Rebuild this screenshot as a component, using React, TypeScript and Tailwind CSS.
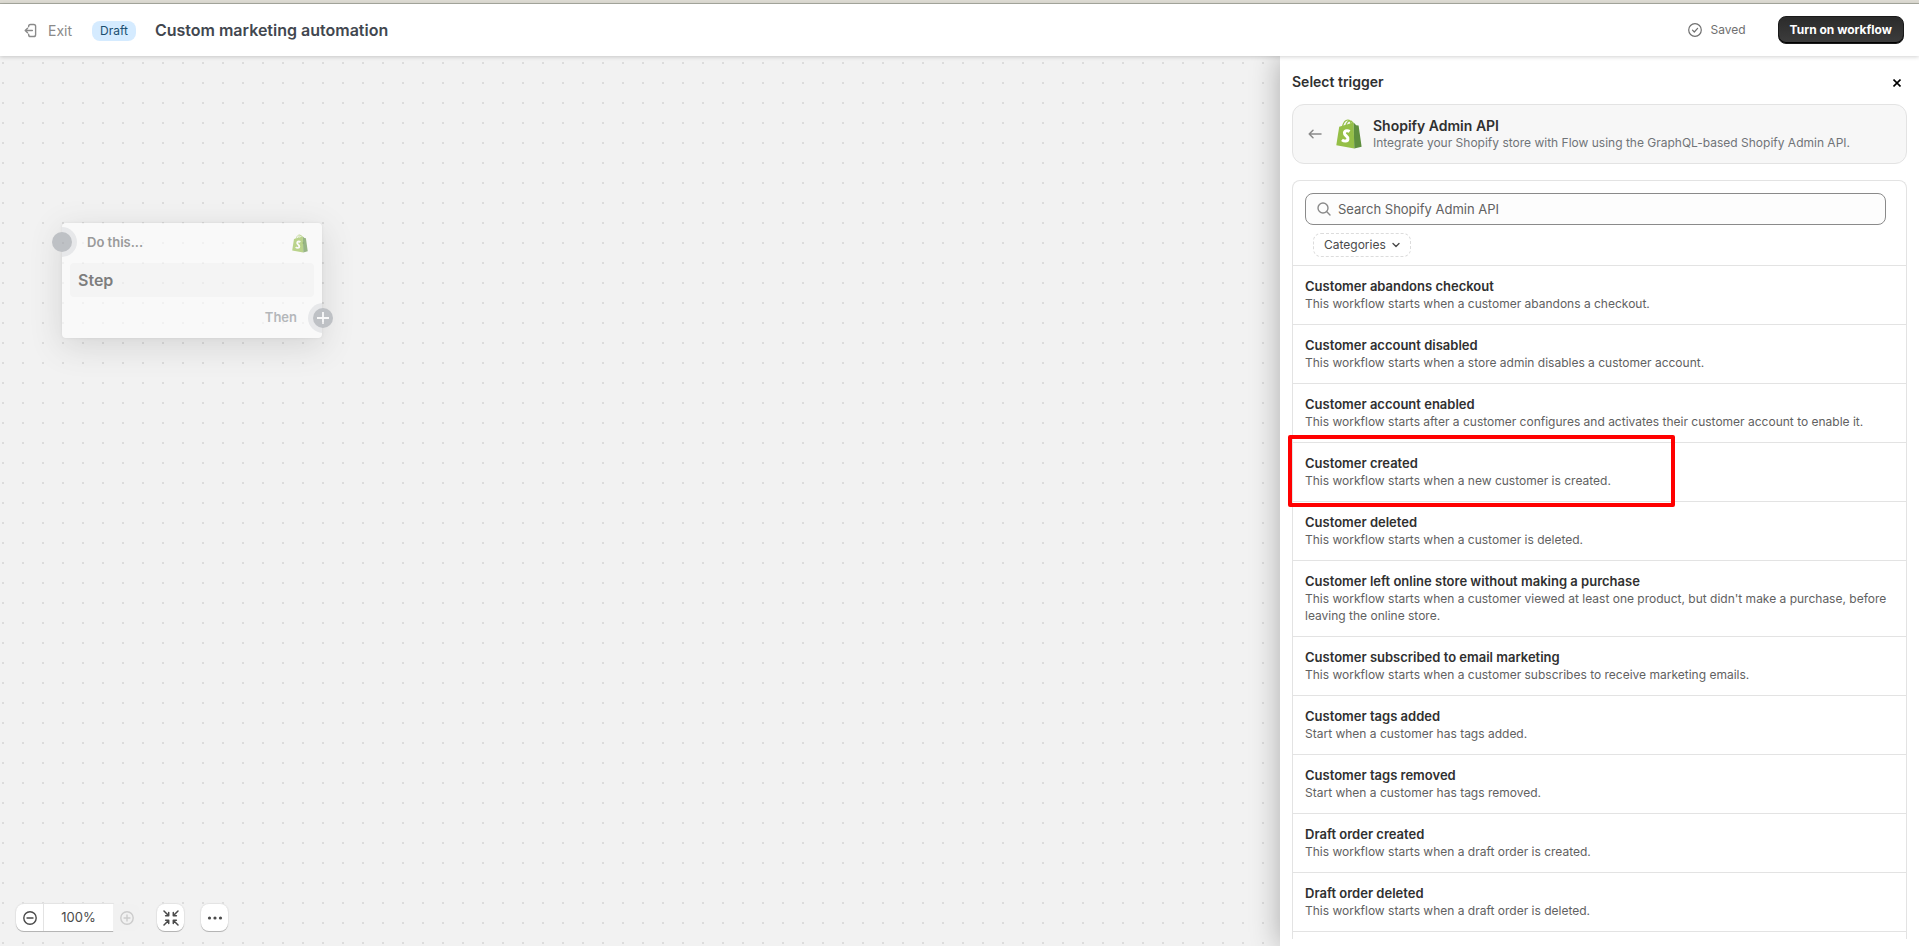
import React, { useState } from 'react';

interface Trigger {
    title: string;
    description: string;
    highlighted?: boolean;
}

interface IconProps {
    className?: string;
}

const TRIGGERS: Trigger[] = [
    { title: 'Customer abandons checkout', description: 'This workflow starts when a customer abandons a checkout.' },
    { title: 'Customer account disabled', description: 'This workflow starts when a store admin disables a customer account.' },
    { title: 'Customer account enabled', description: 'This workflow starts after a customer configures and activates their customer account to enable it.' },
    { title: 'Customer created', description: 'This workflow starts when a new customer is created.', highlighted: true },
    { title: 'Customer deleted', description: 'This workflow starts when a customer is deleted.' },
    { title: 'Customer left online store without making a purchase', description: "This workflow starts when a customer viewed at least one product, but didn't make a purchase, before leaving the online store." },
    { title: 'Customer subscribed to email marketing', description: 'This workflow starts when a customer subscribes to receive marketing emails.' },
    { title: 'Customer tags added', description: 'Start when a customer has tags added.' },
    { title: 'Customer tags removed', description: 'Start when a customer has tags removed.' },
    { title: 'Draft order created', description: 'This workflow starts when a draft order is created.' },
    { title: 'Draft order deleted', description: 'This workflow starts when a draft order is deleted.' },
];

const ShopifyIcon: React.FC<IconProps> = ({ className }) => (
    <svg className={className} viewBox="0 0 26 30" fill="none" aria-hidden="true">
        <path d="M3.2 7.800 17.600 3.600 18.300 29.600 0.300 26.200z" fill="#95bf47" />
        <path d="M17.600 3.600 20.200 6.200 22.600 6.500 25.600 27.700 18.300 29.600z" fill="#5e8e3e" />
        <path d="M6.400 8C7.200 4.400 9.400 1 11.800 1c2 0 3.200 2 3.300 4.800M9.800 7C10.400 4 12.400 1.800 14 1.800c1.800 0 2.600 1.600 2.800 3.600" stroke="#95bf47" strokeWidth="1.200" />
        <path d="M13.600 12.400c-1.200-.8-4.800-1.400-5.200 1.400-.4 2.800 3.900 3.100 3.500 6.200-.3 2.700-3.800 2.600-5.900.9" stroke="#fff" strokeWidth="3" />
    </svg>
);

const ExitIcon: React.FC<IconProps> = ({ className }) => (
    <svg className={className} viewBox="0 0 14 16" fill="none" stroke="currentColor" strokeWidth="1.500" strokeLinecap="round" strokeLinejoin="round" aria-hidden="true">
        <path d="M5 4V3.500A2 2 0 0 1 7 1.500h3.500a2 2 0 0 1 2 2v9a2 2 0 0 1-2 2H7a2 2 0 0 1-2-2V12M9 8H1.500M3.800 5.500 1.300 8l2.500 2.500" />
    </svg>
);

const SavedIcon: React.FC<IconProps> = ({ className }) => (
    <svg className={className} viewBox="0 0 14 14" fill="none" stroke="currentColor" strokeWidth="1.200" strokeLinecap="round" strokeLinejoin="round" aria-hidden="true">
        <circle cx="7" cy="7" r="6.300" />
        <path d="m4.500 7.200 1.800 1.800 3.300-3.700" />
    </svg>
);

const CircleIcon: React.FC<IconProps & { plus?: boolean }> = ({ className, plus }) => (
    <svg className={className} viewBox="0 0 14 14" fill="none" stroke="currentColor" strokeWidth="1.400" strokeLinecap="round" aria-hidden="true">
        <circle cx="7" cy="7" r="6.200" />
        <path d="M4 7h6" />
        {plus && <path d="M7 4v6" />}
    </svg>
);

const FitIcon: React.FC<IconProps> = ({ className }) => (
    <svg className={className} viewBox="0 0 16 16" fill="none" stroke="currentColor" strokeWidth="1.500" strokeLinecap="round" strokeLinejoin="round" aria-hidden="true">
        <path d="m1 1 4.500 4.500M2.600 5.700h3.100V2.600M15 1l-4.500 4.500M13.400 5.700h-3.100V2.600M1 15l4.500-4.500M2.600 10.300h3.100v3.100M15 15l-4.500-4.500M13.400 10.300h-3.100v3.100" />
    </svg>
);

const BackIcon: React.FC<IconProps> = ({ className }) => (
    <svg className={className} viewBox="0 0 14 10" fill="none" stroke="currentColor" strokeWidth="1.500" strokeLinecap="round" strokeLinejoin="round" aria-hidden="true">
        <path d="M13 5H1.200M5 1.200 1.200 5 5 8.800" />
    </svg>
);

const SearchIcon: React.FC<IconProps> = ({ className }) => (
    <svg className={className} viewBox="0 0 14 14" fill="none" stroke="currentColor" strokeWidth="1.400" strokeLinecap="round" aria-hidden="true">
        <circle cx="6" cy="6" r="5" />
        <path d="m9.800 9.800 3.200 3.200" />
    </svg>
);

const Header: React.FC = () => (
    <header className="relative z-20 flex h-[52px] shrink-0 items-center bg-white pl-6 pr-[15px] shadow-[0_1px_4px_rgba(0,0,0,0.18)]">
        <button type="button" className="flex items-center gap-[11px] text-[#8a8a8a]">
            <ExitIcon className="h-[15px] w-[13px]" />
            <span className="pt-px text-sm">Exit</span>
        </button>
        <span className="ml-5 mt-px rounded-lg bg-[#d5ebff] px-2 text-xs leading-5 text-[#1b4f70]">Draft</span>
        <h1 className="ml-[19px] text-base font-semibold text-[#42474f]">Custom marketing automation</h1>
        <div className="ml-auto flex items-center gap-2 text-[#707070]">
            <SavedIcon className="h-[14px] w-[14px]" />
            <span className="text-xs">Saved</span>
        </div>
        <button
            type="button"
            className="ml-8 h-7 rounded-lg border border-[#1a1a1a] bg-linear-to-b from-[#2b2b2b] to-[#3d3d3d] px-[11px] text-xs font-bold text-white shadow-[inset_0_-1px_0_#000]"
        >
            Turn on workflow
        </button>
    </header>
);

const StepNode: React.FC = () => (
    <div className="absolute left-[62px] top-[167px] w-[260px] opacity-60">
        <div className="relative overflow-hidden rounded bg-white p-2 pt-0 shadow-[0_0_3px_rgba(0,0,0,0.12),0_8px_32px_rgba(0,0,0,0.2)]">
            <span className="absolute -left-[15px] top-1 h-[30px] w-[30px] rounded-full bg-[#e1e3e6]" />
            <span className="absolute -right-4 bottom-[5px] h-[30px] w-[30px] rounded-full bg-[#e1e3e6]" />
            <div className="flex h-10 items-center justify-between pl-[17px] pr-[6px]">
                <span className="text-[13px] font-semibold text-[#616161]">Do this...</span>
                <ShopifyIcon className="h-[19px] w-4" />
            </div>
            <div className="rounded bg-[#f6f6f6] px-2 py-[5px] text-base font-semibold text-[#303030]">Step</div>
            <div className="flex h-[33px] items-center justify-end pr-[17px] pt-2">
                <span className="text-[13px] font-semibold text-[#8c9196]">Then</span>
            </div>
        </div>
        <span className="absolute -left-[10px] top-[9px] h-5 w-5 rounded-full bg-[#9da1a8]" />
        <button
            type="button"
            aria-label="Add next step"
            className="absolute -right-[11px] bottom-[10px] flex h-5 w-5 items-center justify-center rounded-full bg-[#9da1a8] text-white"
        >
            <svg className="h-3 w-3" viewBox="0 0 12 12" stroke="currentColor" strokeWidth="1.800" aria-hidden="true">
                <path d="M6 0v12M0 6h12" />
            </svg>
        </button>
    </div>
);

const ZoomControls: React.FC = () => {
    const box = 'flex h-[27px] w-[27px] items-center justify-center rounded-lg bg-white text-[#4a4a4a] shadow-[0_1px_0_#b5b5b5,0_0_1px_1px_#e3e3e3]';

    return (
        <div className="absolute bottom-[15px] left-4 flex gap-[17px]">
            <div className="flex h-[27px]">
                <div className="flex rounded-l-lg bg-white shadow-[0_1px_0_#b5b5b5,0_0_1px_1px_#e3e3e3]">
                    <button type="button" aria-label="Zoom out" className="flex w-7 items-center justify-center border-r border-[#e3e3e3] text-[#4a4a4a]">
                        <CircleIcon className="h-[14px] w-[14px]" />
                    </button>
                    <span className="flex w-[69px] items-center justify-center pt-px text-[13px] text-[#4a4a4a]">100%</span>
                </div>
                <button type="button" aria-label="Zoom in" disabled className="flex w-[27px] items-center justify-center rounded-r-lg bg-[#f1f1f1] text-[#cccccc]">
                    <CircleIcon plus className="h-[14px] w-[14px]" />
                </button>
            </div>
            <button type="button" aria-label="Fit to screen" className={box}>
                <FitIcon className="h-4 w-4" />
            </button>
            <button type="button" aria-label="More actions" className={box}>
                <svg className="h-4 w-4" viewBox="0 0 16 16" fill="currentColor" aria-hidden="true">
                    <circle cx="2.500" cy="8" r="1.600" />
                    <circle cx="8" cy="8" r="1.600" />
                    <circle cx="13.500" cy="8" r="1.600" />
                </svg>
            </button>
        </div>
    );
};

const TriggerRow: React.FC<Trigger> = ({ title, description, highlighted }) => (
    <li className="relative border-b border-[#e3e3e3]">
        <button type="button" className="block w-full px-3 pb-3 pt-[11px] text-left">
            <span className="block text-[13px] font-semibold leading-[18px] text-[#303030]">{title}</span>
            <span className="block text-xs leading-[17px] text-[#616161]">{description}</span>
        </button>
        {highlighted && (
            <span className="pointer-events-none absolute -left-[5px] -top-2 z-10 h-[72px] w-[387px] rounded-[2px] border-4 border-[#ff0000]" />
        )}
    </li>
);

const TriggerPanel: React.FC = () => {
    const [query, setQuery] = useState('');

    const visible = TRIGGERS.filter((t) => t.title.toLowerCase().includes(query.toLowerCase()));

    return (
        <aside className="relative z-10 flex w-[639px] shrink-0 flex-col overflow-y-auto bg-white px-3 pb-[7px] shadow-[0_0_28px_rgba(0,0,0,0.3)]">
            <div className="flex h-12 shrink-0 items-center justify-between pt-1">
                <h2 className="text-sm font-semibold text-[#303030]">Select trigger</h2>
                <button type="button" aria-label="Close" className="p-[6px] pb-1 text-black">
                    <svg className="h-2 w-2" viewBox="0 0 8 8" stroke="currentColor" strokeWidth="1.600" aria-hidden="true">
                        <path d="m.5.5 7 7M7.500.5l-7 7" />
                    </svg>
                </button>
            </div>

            {/* Connector */}
            <div className="flex h-[60px] shrink-0 items-center rounded-xl border border-[#e3e3e3] bg-[#f7f7f7] px-[15px]">
                <button type="button" aria-label="Back" className="text-[#8a8a8a]">
                    <BackIcon className="h-[10px] w-[14px]" />
                </button>
                <ShopifyIcon className="ml-[14px] h-[30px] w-[26px]" />
                <div className="ml-[11px] pb-px">
                    <h3 className="text-sm font-semibold leading-[18px] text-[#303030]">Shopify Admin API</h3>
                    <p className="text-xs text-[#707478]">Integrate your Shopify store with Flow using the GraphQL-based Shopify Admin API.</p>
                </div>
            </div>

            {/* Trigger list */}
            <div className="mt-4 shrink-0 grow rounded-t-lg border border-b-0 border-[#e3e3e3]">
                <div className="h-[85px] border-b border-[#e3e3e3] pl-3 pr-5 pt-3">
                    <label className="flex h-8 items-center gap-[7px] rounded-lg border border-[#8a8a8a] bg-[#fdfdfd] px-[11px] text-[#8a8a8a]">
                        <SearchIcon className="h-[14px] w-[14px] shrink-0" />
                        <input
                            type="search"
                            aria-label="Search Shopify Admin API"
                            placeholder="Search Shopify Admin API"
                            value={query}
                            onChange={(e) => setQuery(e.target.value)}
                            className="w-full bg-transparent pt-px text-[13px] text-[#303030] outline-none placeholder:text-[#616161]"
                        />
                    </label>
                    <button type="button" className="ml-2 mt-2 flex h-6 items-center gap-[6px] rounded-lg border border-dashed border-[#dcdcdc] px-[10px] text-xs text-[#4a4a4a]">
                        Categories
                        <svg className="h-[6px] w-2" viewBox="0 0 8 6" fill="none" stroke="currentColor" strokeWidth="1.400" strokeLinecap="round" strokeLinejoin="round" aria-hidden="true">
                            <path d="m1 1.500 3 3 3-3" />
                        </svg>
                    </button>
                </div>
                <ul>
                    {visible.map((trigger) => (
                        <TriggerRow key={trigger.title} {...trigger} />
                    ))}
                </ul>
            </div>
        </aside>
    );
};

export default function App() {
    return (
        <div className="flex h-screen flex-col overflow-hidden font-['Inter',sans-serif]">
            <div className="h-1 shrink-0 border-b border-[#a9aba0] bg-[#dcdad2]" />
            <Header />
            <div className="flex min-h-0 flex-1">
                <main className="relative flex-1 bg-[#f2f2f2] bg-[radial-gradient(circle,#dcdcdc_1px,transparent_1px)] bg-[length:20px_20px] bg-position-[-7px_-3px]">
                    <StepNode />
                    <ZoomControls />
                </main>
                <TriggerPanel />
            </div>
        </div>
    );
}
